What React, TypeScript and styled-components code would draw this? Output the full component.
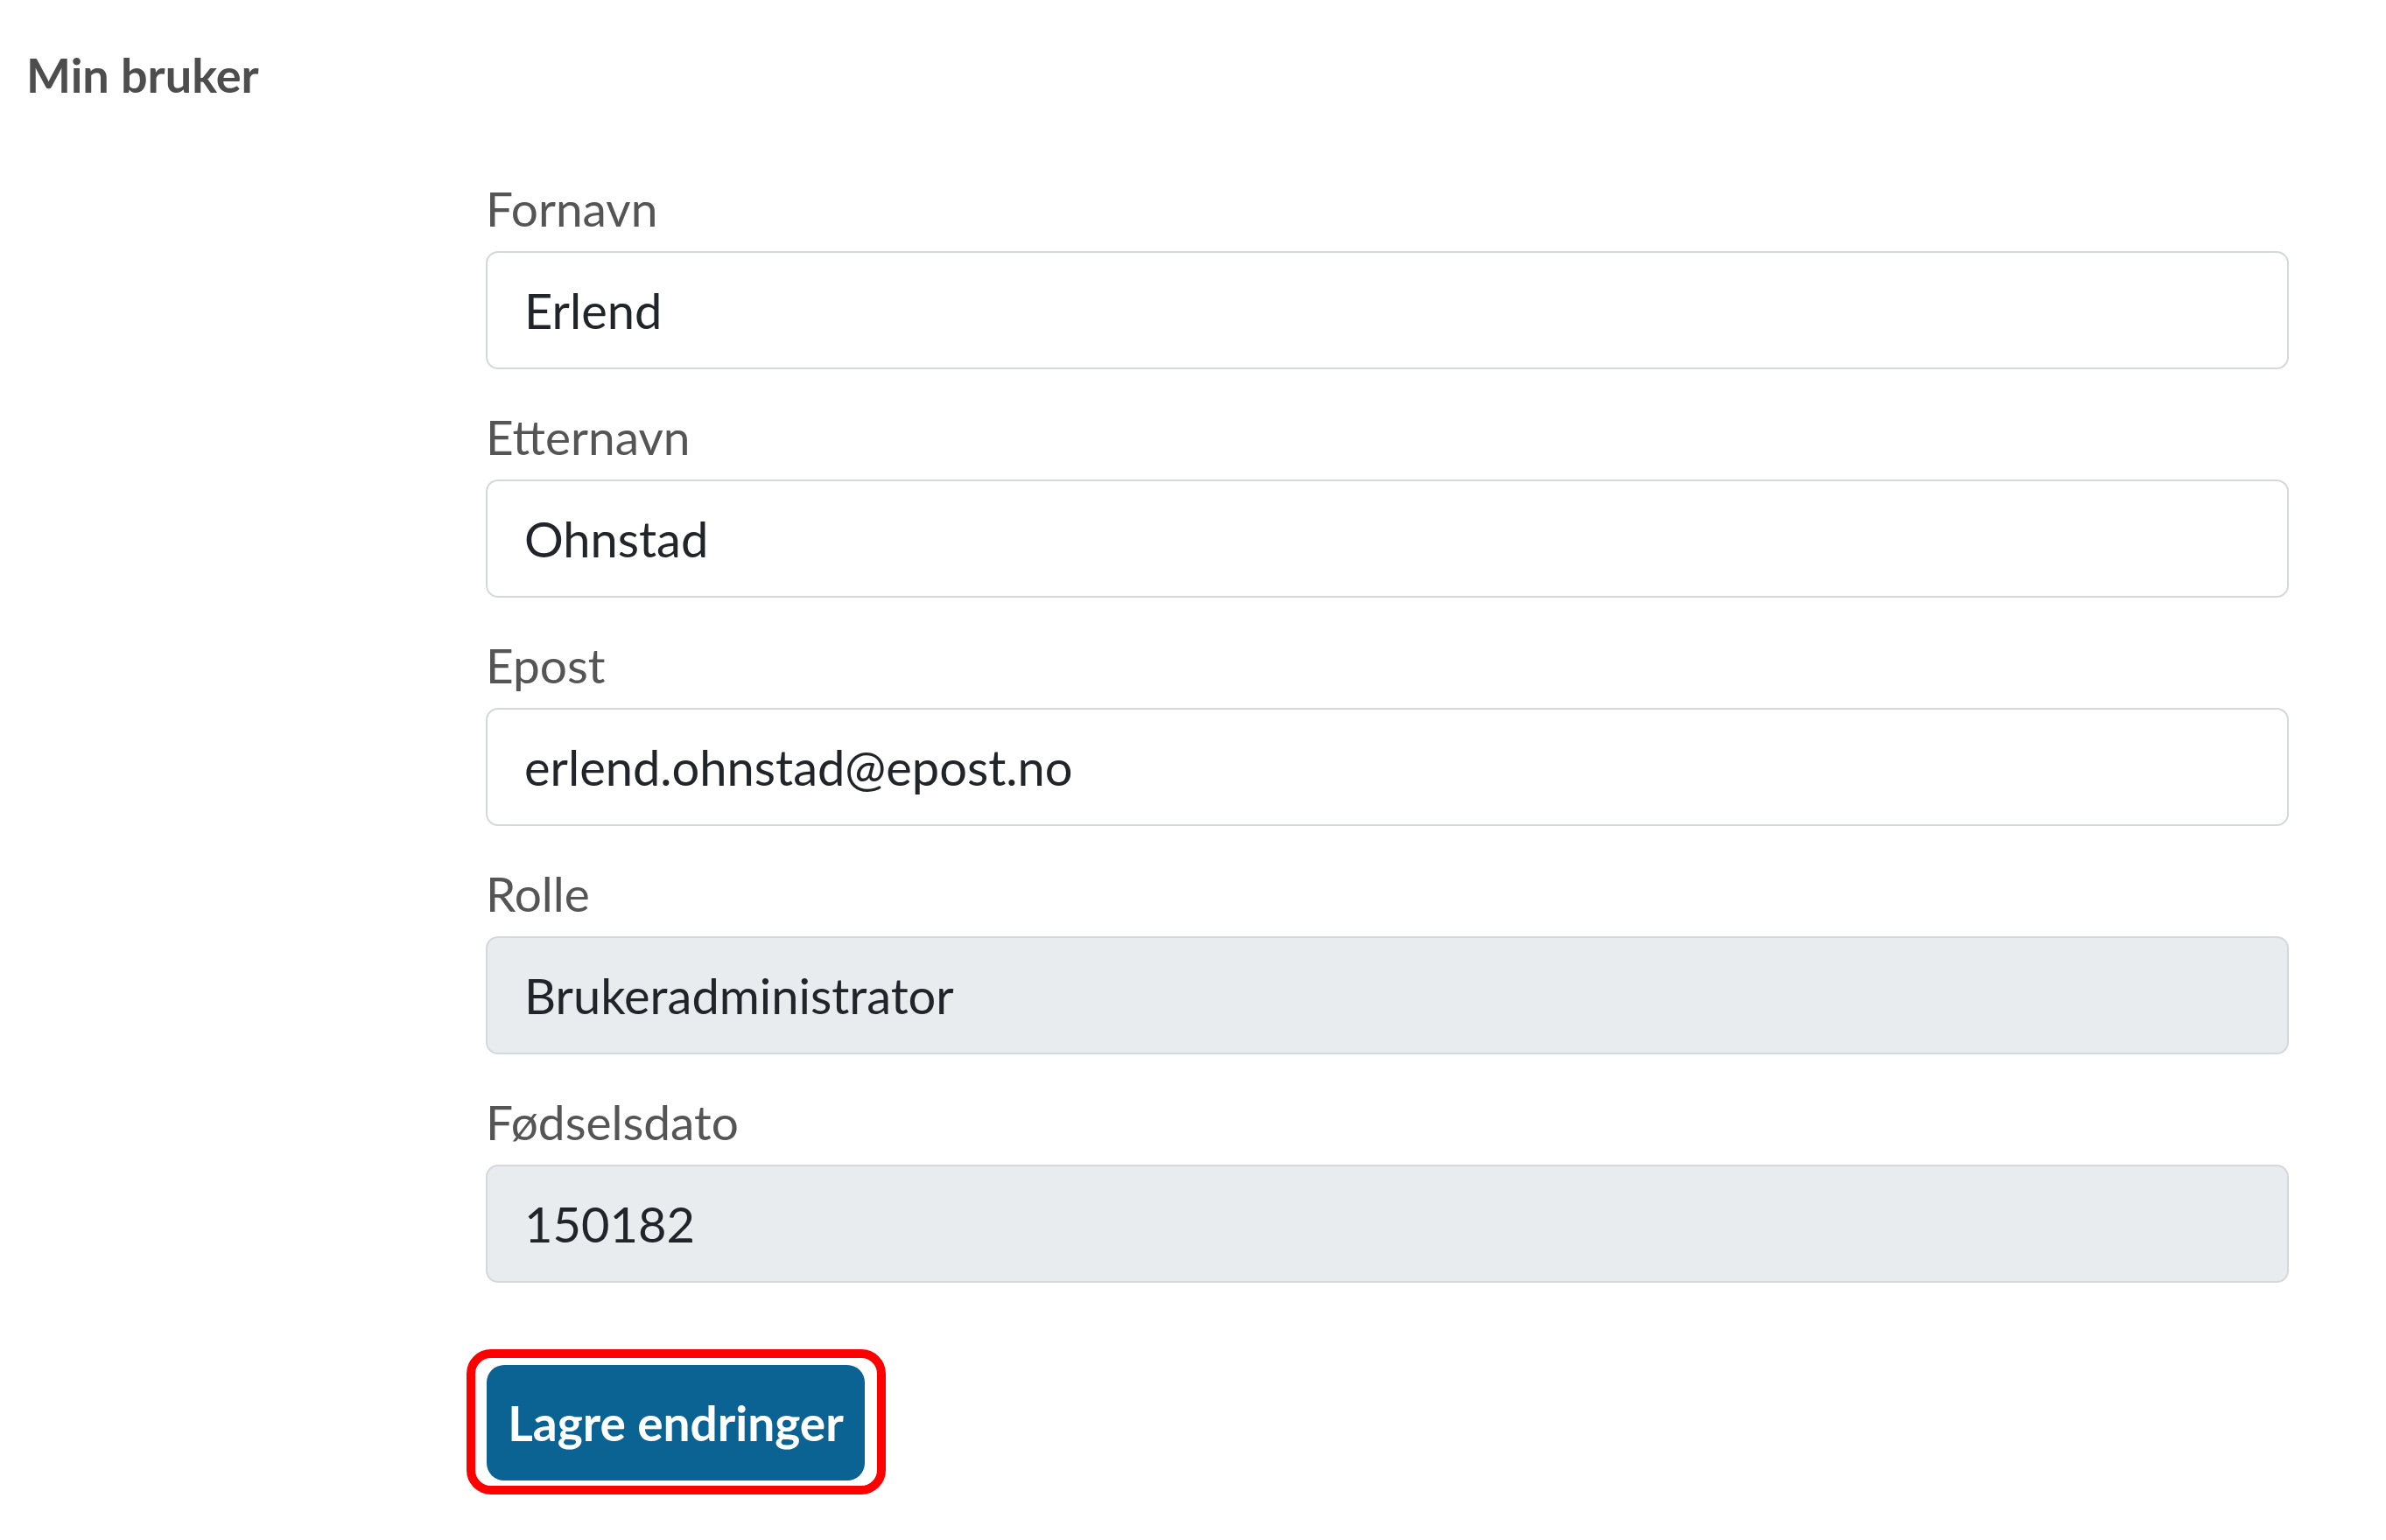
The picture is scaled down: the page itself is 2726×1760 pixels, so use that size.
import styled, { createGlobalStyle } from "styled-components";

const GlobalStyle = createGlobalStyle`
  html, body {
    margin: 0;
    padding: 0;
    background: #ffffff;
  }
  body {
    font-family: Lato, "Liberation Sans", sans-serif;
  }
`;

const Page = styled.div`
  padding: 0 30px;
  width: 2726px;
  box-sizing: border-box;
`;

const Title = styled.h1`
  margin: 56px 0 0 0;
  font-size: 54px;
  line-height: 60px;
  font-weight: 700;
  color: #4d4d4d;
`;

const Form = styled.form`
  display: flex;
  flex-direction: column;
  gap: 47px;
  margin: 92px 0 0 525px;
  width: 2060px;
`;

const Field = styled.div`
  display: flex;
  flex-direction: column;
`;

const Label = styled.label`
  font-size: 55px;
  line-height: 60px;
  color: #555555;
  margin-bottom: 19px;
`;

const Input = styled.input<{ $readOnly?: boolean }>`
  box-sizing: border-box;
  height: 135px;
  width: 100%;
  padding: 0 42px;
  border: 2px solid #d3d8dd;
  border-radius: 14px;
  font-family: Lato, "Liberation Sans", sans-serif;
  font-size: 56px;
  color: #212529;
  background: ${(p) => (p.$readOnly ? "#e9ecef" : "#ffffff")};
  outline: none;
`;

const Actions = styled.div`
  display: flex;
  margin-top: 29px;
`;

const Highlight = styled.div`
  display: inline-flex;
  margin-left: -22px;
  padding: 8px 14px 6px 13px;
  border: 10px solid #ff0000;
  border-radius: 28px;
`;

const SaveButton = styled.button`
  width: 432px;
  height: 132px;
  border: none;
  border-radius: 20px;
  background: #0b6393;
  color: #ffffff;
  font-family: Lato, "Liberation Sans", sans-serif;
  font-size: 55px;
  font-weight: 700;
  cursor: pointer;
`;

type FieldDef = {
  label: string;
  value: string;
  readOnly?: boolean;
};

const fields: FieldDef[] = [
  { label: "Fornavn", value: "Erlend" },
  { label: "Etternavn", value: "Ohnstad" },
  { label: "Epost", value: "erlend.ohnstad@epost.no" },
  { label: "Rolle", value: "Brukeradministrator", readOnly: true },
  { label: "Fødselsdato", value: "150182", readOnly: true },
];

const App = () => {
  return (
    <>
      <GlobalStyle />
      <Page>
        <Title>Min bruker</Title>
        <Form onSubmit={(e) => e.preventDefault()}>
          {fields.map((f) => (
            <Field key={f.label}>
              <Label>{f.label}</Label>
              <Input
                defaultValue={f.value}
                readOnly={f.readOnly}
                $readOnly={f.readOnly}
              />
            </Field>
          ))}
          <Actions>
            <Highlight>
              <SaveButton type="submit">Lagre endringer</SaveButton>
            </Highlight>
          </Actions>
        </Form>
      </Page>
    </>
  );
};

export default App;
